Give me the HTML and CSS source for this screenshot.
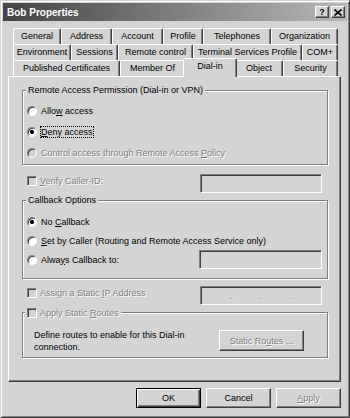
FILE: index.html
```html
<!DOCTYPE html>
<html lang="en">
<head>
    <meta charset="UTF-8">
    <title>Bob Properties</title>
    <link rel="stylesheet" href="styles.css">
</head>
<body>
    <div class="window">
        <div class="titlebar">
            <span class="title">Bob Properties</span>
            <div class="caption-btns">
                <span class="cbtn">?</span>
                <span class="cbtn">
                    <svg width="8" height="7" viewBox="0 0 8 7"><path d="M0.5 0.5 L7.5 6.5 M7.5 0.5 L0.5 6.5" stroke="#000" stroke-width="1.6"/></svg>
                </span>
            </div>
        </div>

        <div class="tabs">
            <div class="tab-row">
                <div class="tab" style="width: 48px">General</div>
                <div class="tab" style="width: 51px">Address</div>
                <div class="tab" style="width: 51px">Account</div>
                <div class="tab" style="width: 40px">Profile</div>
                <div class="tab" style="width: 68px">Telephones</div>
                <div class="tab" style="width: 67px">Organization</div>
            </div>
            <div class="tab-row">
                <div class="tab" style="width: 58px">Environment</div>
                <div class="tab" style="width: 47px">Sessions</div>
                <div class="tab" style="width: 75px">Remote control</div>
                <div class="tab" style="width: 109px">Terminal Services Profile</div>
                <div class="tab" style="width: 36px">COM+</div>
            </div>
            <div class="tab-row">
                <div class="tab" style="width: 107px">Published Certificates</div>
                <div class="tab" style="width: 65px">Member Of</div>
                <div class="tab active" style="width: 54px">Dial-in</div>
                <div class="tab" style="width: 48px">Object</div>
                <div class="tab" style="width: 55px">Security</div>
            </div>
        </div>

        <div class="panel">
            <div class="group perm">
                <div class="group-label">Remote Access Permission (Dial-in or VPN)</div>
                <div class="opt"><span class="radio"></span><span>Allo<u>w</u> access</span></div>
                <div class="opt"><span class="radio on"></span><span class="focus"><u>D</u>eny access</span></div>
                <div class="opt off"><span class="radio"></span><span>Control access through Remote Access <u>P</u>olicy</span></div>
            </div>

            <div class="line">
                <div class="check-label off"><span class="check"></span><span><u>V</u>erify Caller-ID:</span></div>
                <div class="textbox"></div>
            </div>

            <div class="group callback">
                <div class="group-label">Callback Options</div>
                <div class="opt"><span class="radio on"></span><span>No <u>C</u>allback</span></div>
                <div class="opt"><span class="radio"></span><span><u>S</u>et by Caller (Routing and Remote Access Service only)</span></div>
                <div class="opt"><span class="radio"></span><span>Alwa<u>y</u>s Callback to:</span><div class="textbox"></div></div>
            </div>

            <div class="line">
                <div class="check-label off"><span class="check"></span><span>Assign a Static <u>I</u>P Address</span></div>
                <div class="textbox ip">
                    <span></span><i>.</i><span></span><i>.</i><span></span><i>.</i><span></span>
                </div>
            </div>

            <div class="group routes">
                <div class="group-label">
                    <div class="check-label off"><span class="check"></span><span>Apply Static <u>R</u>outes</span></div>
                </div>
                <div class="routes-row">
                    <div class="routes-text">Define routes to enable for this Dial-in connection.</div>
                    <div class="btn wide off">Static Ro<u>u</u>tes ...</div>
                </div>
            </div>
        </div>

        <div class="buttons">
            <div class="btn default">OK</div>
            <div class="btn">Cancel</div>
            <div class="btn off"><u>A</u>pply</div>
        </div>
    </div>
</body>
</html>
```

FILE: styles.css
```css
body {
    margin: 0;
    background: #d4d4d4;
    font-family: "Liberation Sans", Arial, sans-serif;
    font-size: 9px;
    color: #000;
}
.window {
    width: 350px;
    height: 418px;
    box-sizing: border-box;
    background: #d4d4d4;
    border: 1px solid;
    border-color: #d4d4d4 #404040 #404040 #d4d4d4;
    box-shadow: inset 1px 1px #fff, inset -1px -1px #808080;
    padding: 2px;
}
.titlebar {
    height: 18px;
    display: flex;
    align-items: center;
    padding: 0 2px 0 4px;
    background: linear-gradient(to right, #444444, #b8b8b8);
}
.title {
    color: #fff;
    font-weight: bold;
    font-size: 10px;
}
.caption-btns {
    margin-left: auto;
    display: flex;
    gap: 2px;
}
.cbtn {
    width: 14px;
    height: 12px;
    box-sizing: border-box;
    display: flex;
    align-items: center;
    justify-content: center;
    background: #d4d4d4;
    border: 1px solid;
    border-color: #fff #404040 #404040 #fff;
    box-shadow: inset -1px -1px #808080;
    font-weight: bold;
    font-size: 9px;
    line-height: 1;
}

/* tabs */
.tabs {
    margin-top: 7px;
    padding: 0 9px 0 10px;
}
.tab-row {
    display: flex;
    height: 16px;
}
.tab {
    box-sizing: border-box;
    flex: none;
    height: 16px;
    border: 1px solid;
    border-bottom: none;
    border-color: #fff #404040 transparent #fff;
    border-radius: 2px 2px 0 0;
    box-shadow: inset -1px 0 #808080;
    text-align: center;
    line-height: 15px;
    white-space: nowrap;
    overflow: hidden;
}
.tab.active {
    position: relative;
    z-index: 1;
    height: 19px;
    margin: -2px -2px -1px;
    background: #d4d4d4;
    line-height: 14px;
}

/* panel */
.panel {
    box-sizing: border-box;
    height: 306px;
    margin: 0 6px 0 5px;
    padding: 13px 12px 0 13px;
    border: 1px solid;
    border-color: #fff #404040 #404040 #fff;
    box-shadow: inset -1px -1px #808080;
}
.group {
    position: relative;
    border: 1px solid #808080;
    box-shadow: inset 1px 1px #fff, 1px 1px #fff;
}
.group-label {
    position: absolute;
    top: -7px;
    left: 3px;
    padding: 0 2px;
    line-height: 13px;
    background: #d4d4d4;
}
.perm {
    padding: 9px 4px 1px;
}
.perm .opt {
    height: 21px;
}
.callback {
    margin-top: 7px;
    padding: 11px 5px 9px 4px;
}
.callback .opt {
    height: 19px;
}
.opt {
    display: flex;
    align-items: center;
    gap: 4px;
    white-space: nowrap;
}
.focus {
    outline: 1px dotted #000;
    outline-offset: 0;
}
.off {
    color: #808080;
    text-shadow: 1px 1px #fff;
}
.radio {
    flex: none;
    width: 10px;
    height: 10px;
    box-sizing: border-box;
    border-radius: 50%;
    border: 1px solid;
    border-color: #808080 #fff #fff #808080;
    box-shadow: inset 1px 1px #404040;
    background: #fff;
}
.radio.on {
    background: radial-gradient(circle, #000 0 1.8px, #fff 2.3px);
}
.opt.off .radio {
    background: #d4d4d4;
}
.check {
    flex: none;
    width: 10px;
    height: 10px;
    box-sizing: border-box;
    border: 1px solid;
    border-color: #808080 #fff #fff #808080;
    box-shadow: inset 1px 1px #404040;
    background: #d4d4d4;
}
.check-label {
    display: flex;
    align-items: center;
    gap: 3px;
    height: 14px;
    white-space: nowrap;
}
.line {
    display: flex;
    align-items: flex-start;
    height: 19px;
    margin-top: 9px;
    padding: 0 6px 0 5px;
}
.line + .group {
    margin-top: 7px;
}
.group + .line {
    margin-top: 9px;
}
.callback + .line {
    margin-top: 7px;
}
.textbox {
    flex: none;
    margin-left: auto;
    width: 122px;
    height: 19px;
    box-sizing: border-box;
    border: 1px solid;
    border-color: #808080 #fff #fff #808080;
    box-shadow: inset 1px 1px #404040, inset -1px -1px #d4d4d4;
    background: #d4d4d4;
}
.callback .textbox {
    width: 123px;
}
.ip {
    display: flex;
    align-items: center;
    padding: 0 2px;
}
.ip span {
    flex: 1;
}
.ip i {
    font-style: normal;
    color: #808080;
    text-shadow: 1px 1px #fff;
}
.routes {
    padding: 16px 23px 4px 11px;
}
.routes .group-label {
    left: 2px;
}
.routes-row {
    display: flex;
    align-items: flex-start;
}
.routes-text {
    width: 160px;
    line-height: 12px;
}
.btn {
    box-sizing: border-box;
    width: 65px;
    height: 20px;
    display: flex;
    align-items: center;
    justify-content: center;
    background: #d4d4d4;
    border: 1px solid;
    border-color: #fff #404040 #404040 #fff;
    box-shadow: inset -1px -1px #808080;
    white-space: nowrap;
}
.btn.wide {
    width: 85px;
    height: 21px;
    margin: 1px 0 0 auto;
}
.btn.default {
    border-color: #000;
    box-shadow: inset 1px 1px #fff, inset -1px -1px #404040, inset -2px -2px #808080;
}

/* dialog buttons */
.buttons {
    display: flex;
    justify-content: flex-end;
    gap: 5px;
    margin-top: 6px;
    padding-right: 6px;
}
```
